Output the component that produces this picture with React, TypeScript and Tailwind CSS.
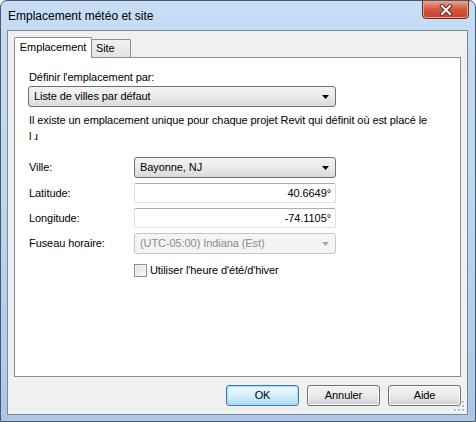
import React from 'react';

const ui = { fontFamily: '"Liberation Sans", Arial, sans-serif' };

function Arrow({ disabled }: { disabled?: boolean }) {
  return (
    <svg width="7" height="4" viewBox="0 0 7 4" className="shrink-0">
      <path d="M0 0h7L3.5 4z" fill={disabled ? '#a8a8a8' : '#000'} />
    </svg>
  );
}

function Combo({ value, className = '' }: { value: string; className?: string }) {
  return (
    <div
      className={`flex items-center justify-between h-[21px] pl-[5px] pr-[6px] rounded-[3px] border border-[#707070] bg-linear-to-b from-[#f3f3f3] via-[#ebebeb] to-[#d9d9d9] ${className}`}
    >
      <span>{value}</span>
      <Arrow />
    </div>
  );
}

function NumField({ value }: { value: string }) {
  return (
    <div className="flex items-center justify-end h-[20px] w-[202px] pr-[4px] rounded-[2px] border border-[#dbdfe6] border-t-[#abadb3] bg-white">
      {value}
    </div>
  );
}

function Row({ label, children }: { label: string; children: React.ReactNode }) {
  return (
    <div className="flex items-center">
      <span className="w-[106px] pl-px">{label}</span>
      {children}
    </div>
  );
}

function Btn({ label, primary }: { label: string; primary?: boolean }) {
  return (
    <div
      className={`flex items-center justify-center w-[73px] h-[21px] rounded-[3px] border ${
        primary
          ? 'border-[#3c7fb1] bg-linear-to-b from-[#eaf6fd] via-[#d9f0fc] to-[#a7d9f5] shadow-[inset_0_0_0_1px_#a6dcf7]'
          : 'border-[#707070] bg-linear-to-b from-[#f2f2f2] via-[#ebebeb] to-[#cfcfcf] shadow-[inset_0_0_0_1px_#fbfbfb]'
      }`}
    >
      {label}
    </div>
  );
}

export default function App() {
  return (
    <div className="w-[476px] h-[422px] bg-white" style={ui}>
      <div className="w-[476px] h-[422px] rounded-t-[7px] border border-[#4b5868] bg-linear-to-b from-[#c6ddf5] via-[#bcd6f1] to-[#a9c8e9] overflow-hidden">
        {/* title bar */}
        <div className="flex items-start justify-between h-[29px]">
          <span className="pl-[7px] pt-[6px] text-[12px] text-black">Emplacement météo et site</span>
          <div className="mr-[6px] w-[47px] h-[19px] -mt-px flex items-center justify-center rounded-b-[4px] border border-[#6e2b20] bg-linear-to-b from-[#e8a493] via-[#d2553e] to-[#c2462d] shadow-[inset_0_0_0_1px_#eba08f]">
            <svg width="14" height="12" viewBox="0 0 14 12">
              <path d="M3 2l8 8M11 2l-8 8" stroke="#5a2a20" strokeWidth="4" strokeLinecap="square" />
              <path d="M3 2l8 8M11 2l-8 8" stroke="#fff" strokeWidth="2" strokeLinecap="square" />
            </svg>
          </div>
        </div>

        {/* client area */}
        <div className="relative ml-[6px] w-[461px] h-[385px] border border-[#7d8894] bg-[#f0f0f0] text-[11px] tracking-[-0.08px] text-black">
          <div className="ml-[6px] mt-[6px]">
            {/* tabs */}
            <div className="relative z-10 flex items-end h-[20px]">
              <div className="-mb-px h-[21px] w-[78px] flex items-center justify-center rounded-t-[2px] border border-b-0 border-[#898c95] bg-white pb-[2px]">
                Emplacement
              </div>
              <div className="-ml-px h-[18px] w-[40px] flex items-center pl-[4px] rounded-t-[2px] border border-b-0 border-[#898c95] bg-linear-to-b from-[#f2f2f2] to-[#e3e3e3]">
                Site
              </div>
            </div>

            {/* panel */}
            <div className="w-[447px] h-[320px] border border-[#898c95] bg-white pl-[13px]">
              <div className="mt-[13px] pl-px leading-[13px]">Définir l'emplacement par:</div>
              <Combo value="Liste de villes par défaut" className="mt-[2px] w-[308px] h-[20px]" />
              <div className="mt-[5px] pl-px leading-[16px]">
                <div>Il existe un emplacement unique pour chaque projet Revit qui définit où est placé le</div>
                <div>l ɹ</div>
              </div>

              <div className="mt-[13px] flex flex-col gap-[5px]">
                <Row label="Ville:">
                  <Combo value="Bayonne, NJ" className="w-[202px]" />
                </Row>
                <Row label="Latitude:">
                  <NumField value="40.6649°" />
                </Row>
                <Row label="Longitude:">
                  <NumField value="-74.1105°" />
                </Row>
                <Row label="Fuseau horaire:">
                  <div className="flex items-center justify-between h-[21px] w-[202px] pl-[5px] pr-[6px] rounded-[3px] border border-[#c3c6ca] bg-[#f4f4f4] text-[#8b8b8b]">
                    <span>(UTC-05:00) Indiana (Est)</span>
                    <Arrow disabled />
                  </div>
                </Row>
                <div className="flex items-center pl-[106px] mt-[3px]">
                  <div className="w-[13px] h-[13px] border border-[#8e8f8f] bg-linear-to-br from-[#dcdcdc] to-[#fbfbfb] shadow-[inset_0_0_0_1px_#f4f4f4]" />
                  <span className="ml-[3px]">Utiliser l'heure d'été/d'hiver</span>
                </div>
              </div>
            </div>
          </div>

          {/* buttons */}
          <div className="flex justify-end gap-2 mt-[8px] pr-[6px]">
            <Btn label="OK" primary />
            <Btn label="Annuler" />
            <Btn label="Aide" />
          </div>

          {/* resize grip */}
          <svg width="11" height="11" viewBox="0 0 11 11" className="absolute right-[2px] bottom-[2px]">
            {[
              [8, 0], [8, 4], [4, 4], [8, 8], [4, 8], [0, 8],
            ].map(([x, y]) => (
              <g key={`${x}-${y}`}>
                <rect x={x + 1} y={y + 1} width="2" height="2" fill="#fff" />
                <rect x={x} y={y} width="2" height="2" fill="#b8bcc2" />
              </g>
            ))}
          </svg>
        </div>
      </div>
    </div>
  );
}
